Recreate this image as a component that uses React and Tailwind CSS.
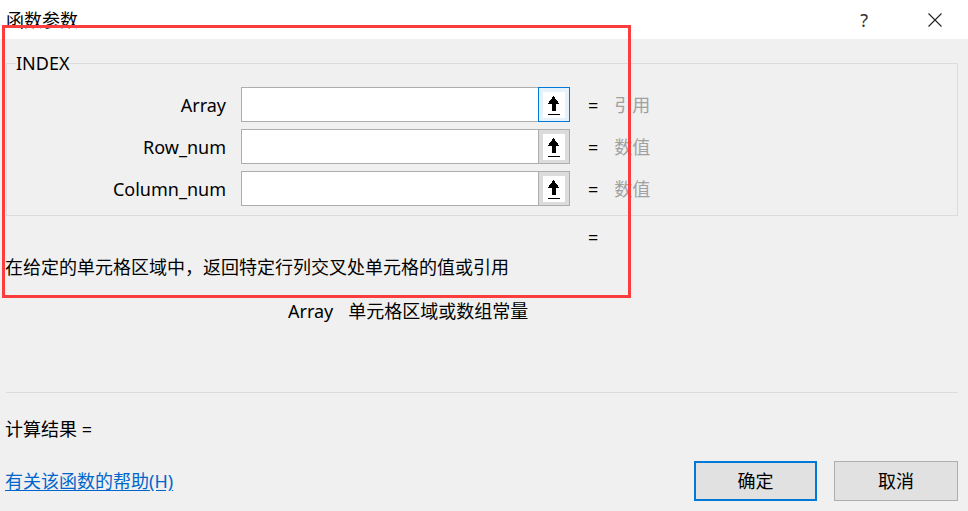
import React from 'react';

const FONT = { fontFamily: '"Noto Sans", "Noto Sans CJK SC", sans-serif' };

const ARGS = [
    { name: 'Array', value: '引用', active: true },
    { name: 'Row_num', value: '数值' },
    { name: 'Column_num', value: '数值' },
];

// small "collapse dialog" arrow used on the ref-edit buttons
const PickIcon = () => (
    <svg width="22" height="26" viewBox="0 0 22 26" className="bg-white" shapeRendering="crispEdges">
        <polygon points="10.5,4 4.5,12 16.5,12" fill="#000" />
        <rect x="8.5" y="11" width="4" height="8" fill="#000" />
        <rect x="4.5" y="22" width="12" height="1" fill="#000" />
    </svg>
);

const ArgRow = ({ name, value, active }) => (
    <div className="flex items-center h-[35px]">
        <div className="w-[219px] text-right leading-[24px]">{name}</div>
        <div className="ml-[15px] flex w-[329px] h-[35px]">
            <div className="flex-1 bg-white border border-r-0 border-[#adadad]" />
            <div
                className={`w-[32px] flex items-center justify-center border ${active
                    ? 'border-[#0078d7] bg-[#e5f1fb]'
                    : 'border-[#adadad] bg-[#dcdcdc]'
                    }`}
            >
                <PickIcon />
            </div>
        </div>
        <span className="ml-[18px] leading-[24px]">=</span>
        <span className="ml-[16px] leading-[24px] text-[#a0a0a0]">{value}</span>
    </div>
);

const App = () => {
    return (
        <div className="relative w-[968px] h-[511px] overflow-hidden bg-[#f0f0f0] text-[18px] text-black" style={FONT}>
            {/* Title bar */}
            <div className="h-[39px] bg-white flex items-center pl-[6px] pr-[26px]">
                <span className="leading-none">函数参数</span>
                <span className="ml-auto text-[#333] leading-none">?</span>
                <svg width="14" height="14" viewBox="0 0 14 14" className="ml-[60px]">
                    <path d="M0.5 0.5 L13.5 13.5 M13.5 0.5 L0.5 13.5" stroke="#222" strokeWidth="1.1" />
                </svg>
            </div>

            <div className="px-[5px]">
                {/* Argument group */}
                <fieldset className="ml-[1px] mt-[12px] w-[952px] border border-[#dcdcdc] pb-[9px]">
                    <legend className="ml-[9px] leading-[24px]">INDEX</legend>
                    <div className="mt-[12px] flex flex-col gap-[7px]">
                        {ARGS.map(a => <ArgRow key={a.name} {...a} />)}
                    </div>
                </fieldset>

                <div className="mt-[9px] pl-[583px] leading-[24px]">=</div>
                <div className="mt-[6px] leading-[24px]">在给定的单元格区域中，返回特定行列交叉处单元格的值或引用</div>
                <div className="mt-[20px] pl-[283px] leading-[24px]">
                    Array<span className="ml-[15px]">单元格区域或数组常量</span>
                </div>

                <div className="mt-[69px] ml-[1px] w-[952px] border-t border-[#dcdcdc]" />

                <div className="mt-[24px] leading-[24px]">计算结果 =</div>

                <div className="mt-[20px] flex items-center pr-[5px]">
                    <a href="#" className="text-[#0066cc] underline underline-offset-2 leading-[24px]">有关该函数的帮助(H)</a>
                    <button className="ml-auto w-[123px] h-[40px] border-2 border-[#0078d7] bg-[#e1e1e1]">确定</button>
                    <button className="ml-[17px] w-[124px] h-[40px] border border-[#adadad] bg-[#e1e1e1]">取消</button>
                </div>
            </div>

            {/* annotation frame */}
            <div className="absolute left-[2px] top-[25px] w-[629px] h-[273px] border-[3px] border-[#fb3d3d] pointer-events-none" />
        </div>
    );
};

export default App;
